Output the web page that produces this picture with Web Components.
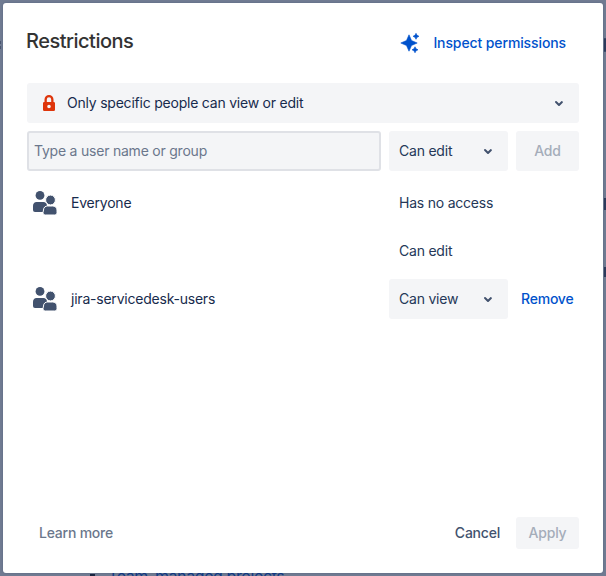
<!DOCTYPE html>
<html>
<head>
<meta charset="utf-8">
<style>
  html, body { margin: 0; height: 100%; }
  body { background: #707b92; font-family: Inter, "Liberation Sans", sans-serif; letter-spacing: -0.22px; overflow: hidden; }
</style>
</head>
<body>
<page-backdrop></page-backdrop>
<restrictions-dialog>
  <span slot="title">Restrictions</span>
  <perm-link slot="action">Inspect permissions</perm-link>
  <mode-select slot="mode">Only specific people can view or edit</mode-select>
  <add-row slot="add"></add-row>
  <group-row name="Everyone"><span>Has no access</span></group-row>
  <group-row><span>Can edit</span></group-row>
  <group-row name="jira-servicedesk-users" removable><drop-select>Can view</drop-select></group-row>
  <span slot="learn">Learn more</span>
  <dialog-actions slot="actions"></dialog-actions>
</restrictions-dialog>
<script>
const CHEVRON = '<svg width="24" height="24" viewBox="0 0 24 24"><path d="M8.3 10.3a1 1 0 0 1 1.4 0l2.3 2.3 2.3-2.3a1 1 0 0 1 1.4 1.4l-3 3a1 1 0 0 1-1.4 0l-3-3a1 1 0 0 1 0-1.4z" fill="#42526e"/></svg>';
const PEOPLE = '<svg width="24" height="24" viewBox="0 0 24 24"><circle cx="7" cy="4.4" r="4.4" fill="#42526e"/><path d="M0 14.5C0 12.600 1.600 11 3.500 11h7c1.900 0 3.500 1.600 3.500 3.500V21H2a2 2 0 0 1-2-2z" fill="#42526e"/><circle cx="17.500" cy="9" r="4.900" fill="#42526e" stroke="#fff" stroke-width="1"/><path d="M10.500 19c0-2.800 2.200-4 4-4h5c2.200 0 4.500 1.200 4.500 4v2.500c0 1.400-1.100 2.500-2.500 2.500h-9c-1.400 0-2.500-1.100-2.500-2.500z" fill="#42526e" stroke="#fff" stroke-width="1"/></svg>';

class PageBackdrop extends HTMLElement {
  constructor() {
    super();
    this.attachShadow({ mode: 'open' }).innerHTML = `<style>
      :host { display: block; position: absolute; inset: 0; overflow: hidden; }
      div { position: absolute; background: #2d3a5c; }
      .bullet { left: 90px; top: 574px; width: 5px; height: 5px; background: #1a2540; }
      .team { left: 108px; top: 566px; background: none; font-size: 16px; line-height: 20px; letter-spacing: -0.4px; white-space: nowrap; color: #123a86; }
      .r1 { left: 604px; top: 38px; width: 2px; height: 14px; border-radius: 2px; }
      .r2 { left: 604px; top: 198px; width: 2px; height: 12px; }
      .r3 { left: 604px; top: 267px; width: 2px; height: 10px; }
      .l1 { left: 0; top: 41px; width: 1px; height: 3px; background: #4a556f; }
      .l2 { left: 0; top: 46px; width: 1px; height: 3px; background: #4a556f; }
    </style>
    <div class="bullet"></div><div class="team">Team-managed projects</div>
    <div class="r1"></div><div class="r2"></div><div class="r3"></div>
    <div class="l1"></div><div class="l2"></div>`;
  }
}

class DropSelect extends HTMLElement {
  constructor() {
    super();
    this.attachShadow({ mode: 'open' }).innerHTML = `<style>
      :host { display: flex; align-items: center; justify-content: space-between; box-sizing: border-box; width: 119px; height: 40px;
        padding: 0 8px 0 10px; background: #f4f5f7; border-radius: 3px; font-size: 14px; color: #253858; }
      span { margin-bottom: 2px; }
      svg { display: block; }
    </style><span><slot></slot></span>${CHEVRON}`;
  }
}

class ModeSelect extends HTMLElement {
  constructor() {
    super();
    this.attachShadow({ mode: 'open' }).innerHTML = `<style>
      :host { display: flex; align-items: center; gap: 8px; height: 40px; box-sizing: border-box; padding: 0 8px 0 12px;
        background: #f4f5f7; border-radius: 3px; font-size: 14px; color: #172b4d; }
      .text { flex: 1; margin-bottom: 2px; }
      svg { display: block; }
    </style>
    <svg width="20" height="24" viewBox="0 0 20 24"><path fill-rule="evenodd" d="M5.500 11V8.500a4.500 4.500 0 0 1 9 0V11h.2A1.300 1.300 0 0 1 16 12.300v6.400a1.300 1.300 0 0 1-1.300 1.300H5.300A1.300 1.300 0 0 1 4 18.700v-6.400A1.300 1.300 0 0 1 5.300 11zm2.300 0h4.400V8.500a2.200 2.200 0 0 0-4.400 0zM10 17.300a1.800 1.800 0 1 0 0-3.600 1.800 1.800 0 0 0 0 3.600z" fill="#de350b"/></svg>
    <span class="text"><slot></slot></span>${CHEVRON}`;
  }
}

class PermLink extends HTMLElement {
  constructor() {
    super();
    this.attachShadow({ mode: 'open' }).innerHTML = `<style>
      :host { display: flex; align-items: center; gap: 13.500px; font-size: 14px; font-weight: 500; letter-spacing: -0.11px; color: #0052cc; }
      span { margin-bottom: 2px; }
      svg { display: block; }
    </style>
    <svg width="20" height="20" viewBox="0 0 20 20" fill="#0052cc" stroke="#0052cc" stroke-width=".6" stroke-linejoin="round"><path d="M9 1.800 11.500 7.500 17.200 10 11.500 12.500 9 18.200 6.500 12.500 .8 10 6.500 7.500z"/><path d="M16 .3l1 2 2 1-2 1-1 2-1-2-2-1 2-1z"/><path d="M15 13.800l1 2 2 1-2 1-1 2-1-2-2-1 2-1z"/></svg>
    <span><slot></slot></span>`;
  }
}

class AddRow extends HTMLElement {
  constructor() {
    super();
    this.attachShadow({ mode: 'open' }).innerHTML = `<style>
      :host { display: flex; gap: 8px; }
      .input { flex: 1; box-sizing: border-box; height: 40px; display: flex; align-items: center; padding: 0 5px 2px;
        background: #f4f5f7; border: 2px solid #dfe1e6; border-radius: 3px; font-size: 14px; color: #6b778c; }
      .add { box-sizing: border-box; width: 63px; height: 40px; padding-bottom: 2px; display: flex; align-items: center; justify-content: center; background: #f4f5f7;
        border-radius: 3px; font-size: 14px; font-weight: 500; color: #a5adba; }
    </style>
    <div class="input">Type a user name or group</div>
    <drop-select>Can edit</drop-select>
    <div class="add">Add</div>`;
  }
}

class GroupRow extends HTMLElement {
  constructor() {
    super();
    const name = this.getAttribute('name');
    const remove = this.hasAttribute('removable');
    this.attachShadow({ mode: 'open' }).innerHTML = `<style>
      :host { display: flex; align-items: center; height: 40px; margin-bottom: 8px; font-size: 14px; color: #172b4d; }
      .who { width: 362px; display: flex; align-items: center; gap: 14px; padding-left: 6px; box-sizing: border-box; }
      .who span, .remove { margin-bottom: 2px; }
      svg { display: block; }
      .perm { width: 119px; box-sizing: border-box; }
      ::slotted(span) { display: block; margin-bottom: 2px; padding-left: 10px; color: #253858; }
      .remove { margin-left: 13px; font-weight: 500; color: #0052cc; }
    </style>
    <div class="who">${name ? PEOPLE + '<span>' + name + '</span>' : ''}</div>
    <div class="perm"><slot></slot></div>
    ${remove ? '<span class="remove">Remove</span>' : ''}`;
  }
}

class DialogActions extends HTMLElement {
  constructor() {
    super();
    this.attachShadow({ mode: 'open' }).innerHTML = `<style>
      :host { display: flex; align-items: center; gap: 16px; font-size: 14px; font-weight: 500; }
      .cancel { color: #42526e; margin-bottom: 2px; }
      .apply { box-sizing: border-box; width: 63px; height: 32px; padding-bottom: 2px; display: flex; align-items: center; justify-content: center;
        background: #f4f5f7; border-radius: 3px; color: #a5adba; }
    </style>
    <span class="cancel">Cancel</span><span class="apply">Apply</span>`;
  }
}

class RestrictionsDialog extends HTMLElement {
  constructor() {
    super();
    this.attachShadow({ mode: 'open' }).innerHTML = `<style>
      :host { display: block; box-sizing: border-box; width: 606px; height: 576px; padding: 3px; position: relative; }
      .panel { box-sizing: border-box; height: 570px; background: #fff; border-radius: 3px; padding: 0 24px 24px;
        display: flex; flex-direction: column; box-shadow: 0 0 2px rgba(9,30,66,.25); }
      header { display: flex; align-items: center; justify-content: space-between; height: 80px; padding-right: 13px; }
      .title { font-size: 20px; font-weight: 500; letter-spacing: -0.5px; color: #333; margin: -4px 0 0 -1px; }
      .add { margin-top: 8px; display: block; }
      main { flex: 1; padding-top: 12px; }
      footer { display: flex; align-items: center; justify-content: space-between; padding-left: 12px; font-size: 14px; font-weight: 500; color: #6b778c; }
      ::slotted([slot="learn"]) { margin-bottom: 2px; }
    </style>
    <div class="panel">
      <header><span class="title"><slot name="title"></slot></span><slot name="action"></slot></header>
      <slot name="mode"></slot>
      <div class="add"><slot name="add"></slot></div>
      <main><slot></slot></main>
      <footer><slot name="learn"></slot><slot name="actions"></slot></footer>
    </div>`;
  }
}

customElements.define('page-backdrop', PageBackdrop);
customElements.define('drop-select', DropSelect);
customElements.define('mode-select', ModeSelect);
customElements.define('perm-link', PermLink);
customElements.define('add-row', AddRow);
customElements.define('group-row', GroupRow);
customElements.define('dialog-actions', DialogActions);
customElements.define('restrictions-dialog', RestrictionsDialog);
</script>
</body>
</html>
